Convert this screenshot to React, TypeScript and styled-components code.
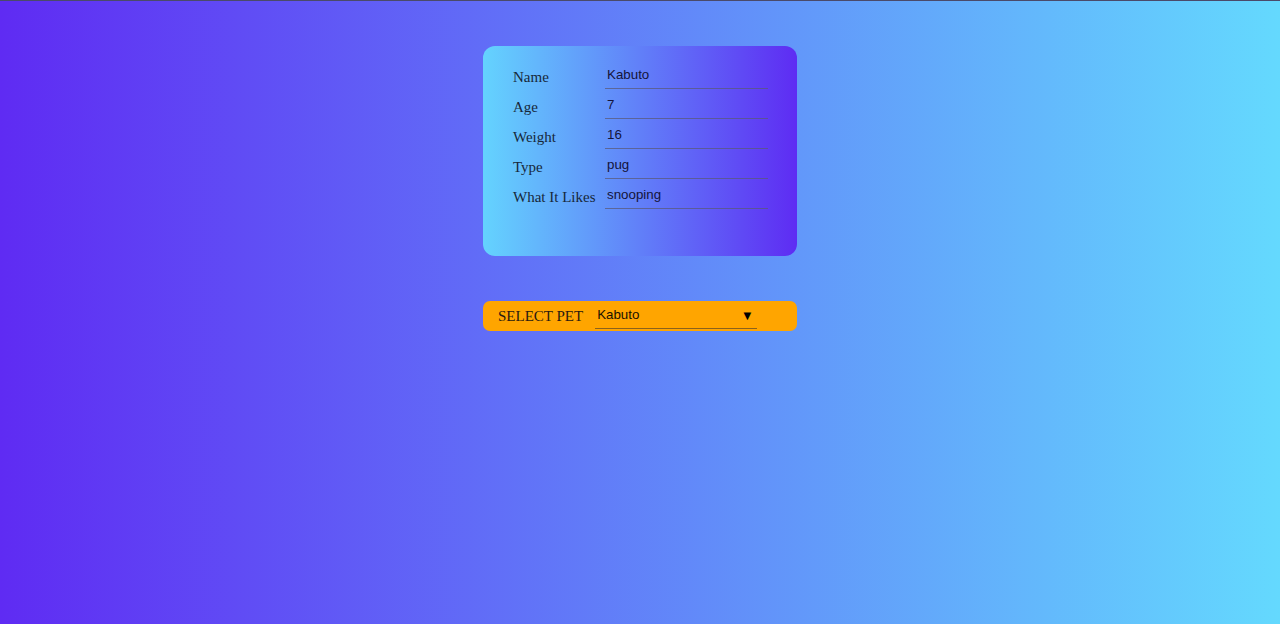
import React, { useState } from "react";
import styled, { createGlobalStyle } from "styled-components";

const Global = createGlobalStyle`
  html, body { margin: 0; padding: 0; }
  body {
    min-height: 624px;
    background: linear-gradient(to right, #5f2bf3, #64d9fe);
    border-top: 1px solid #4a4a6a;
    box-sizing: border-box;
    font-family: "Liberation Serif", "Times New Roman", serif;
  }
`;

const Page = styled.div`
  display: flex;
  flex-direction: column;
  align-items: center;
  padding-top: 45px;
  gap: 45px;
`;

const Card = styled.div`
  width: 314px;
  height: 210px;
  box-sizing: border-box;
  border-radius: 12px;
  background: linear-gradient(to right, #64d3fe, #5e2cf3);
  padding: 13px 29px 0 30px;
  display: grid;
  grid-template-columns: 92px 163px;
  grid-auto-rows: 30px;
  align-content: start;
`;

const Label = styled.label`
  font-family: "Liberation Serif", "Times New Roman", serif;
  font-size: 15px;
  color: #17283a;
  padding-top: 10px;
  white-space: nowrap;
`;

const Field = styled.input`
  box-sizing: border-box;
  width: 163px;
  height: 30px;
  border: none;
  border-bottom: 1px solid rgba(90, 90, 120, 0.75);
  background: transparent;
  font-family: "Liberation Sans", Arial, sans-serif;
  font-size: 13.33px;
  color: #14143a;
  padding: 4px 2px 3px;
  outline: none;
`;

const SelectBar = styled.div`
  width: 314px;
  height: 30px;
  box-sizing: border-box;
  border-radius: 7px;
  background: #ffa500;
  display: flex;
  align-items: center;
  padding-left: 15px;
  gap: 12px;
`;

const SelectLabel = styled.span`
  font-family: "Liberation Serif", "Times New Roman", serif;
  font-size: 15px;
  color: #2a1a10;
  padding-top: 1px;
`;

const SelectWrap = styled.div`
  position: relative;
  width: 162px;
  height: 28px;
  align-self: flex-start;
`;

const Select = styled.select`
  appearance: none;
  -webkit-appearance: none;
  width: 100%;
  height: 100%;
  box-sizing: border-box;
  border: none;
  border-bottom: 1px solid rgba(90, 70, 40, 0.7);
  background: transparent;
  font-family: "Liberation Sans", Arial, sans-serif;
  font-size: 13.33px;
  color: #1a1200;
  padding: 0 2px 1px;
  outline: none;
`;

const Arrow = styled.span`
  position: absolute;
  right: 6px;
  top: 10px;
  font-size: 10px;
  line-height: 10px;
  color: #000;
  pointer-events: none;
  font-family: "DejaVu Sans", sans-serif;
`;

const pets = [
  { name: "Kabuto", age: "7", weight: "16", type: "pug", likes: "snooping" },
];

export default function App() {
  const [pet, setPet] = useState(pets[0]);
  const rows: [string, string][] = [
    ["Name", pet.name],
    ["Age", pet.age],
    ["Weight", pet.weight],
    ["Type", pet.type],
    ["What It Likes", pet.likes],
  ];
  return (
    <>
      <Global />
      <Page>
        <Card>
          {rows.map(([l, v]) => (
            <React.Fragment key={l}>
              <Label>{l}</Label>
              <Field defaultValue={v} />
            </React.Fragment>
          ))}
        </Card>
        <SelectBar>
          <SelectLabel>SELECT PET</SelectLabel>
          <SelectWrap>
            <Select
              value={pet.name}
              onChange={(e) => setPet(pets.find((p) => p.name === e.target.value) || pets[0])}
            >
              {pets.map((p) => (
                <option key={p.name}>{p.name}</option>
              ))}
            </Select>
            <Arrow>▼</Arrow>
          </SelectWrap>
        </SelectBar>
      </Page>
    </>
  );
}
